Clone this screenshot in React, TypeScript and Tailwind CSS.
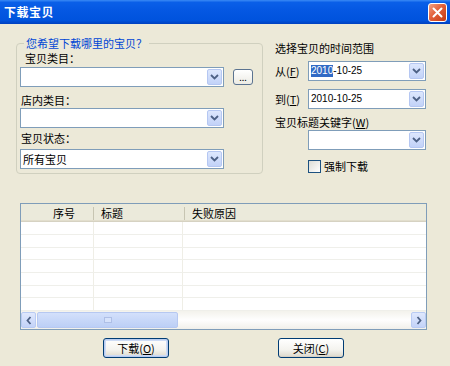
import React from "react";

function Chevron({ dir = "down" }: { dir?: "down" | "left" | "right" }) {
  if (dir === "down")
    return (
      <svg width="9" height="6" viewBox="0 0 9 6">
        <path d="M1 1 L4.5 4.5 L8 1" fill="none" stroke="#4d6185" strokeWidth="1.8" />
      </svg>
    );
  if (dir === "left")
    return (
      <svg width="6" height="9" viewBox="0 0 6 9">
        <path d="M4.5 1 L1.5 4.5 L4.5 8" fill="none" stroke="#4d6185" strokeWidth="1.8" />
      </svg>
    );
  return (
    <svg width="6" height="9" viewBox="0 0 6 9">
      <path d="M1.5 1 L4.5 4.5 L1.5 8" fill="none" stroke="#4d6185" strokeWidth="1.8" />
    </svg>
  );
}

function ArrowBtn() {
  return (
    <div className="mr-[1px] h-[16px] w-[15px] rounded-[2px] border border-[#b5c7f2] bg-[linear-gradient(to_bottom,#dde7fd,#c2d2f8)] flex items-center justify-center">
      <Chevron />
    </div>
  );
}

function Combo({ className, children }: { className: string; children?: React.ReactNode }) {
  return (
    <div className={className + " h-[20px] border border-[#7f9db9] bg-white flex items-center"}>
      <div className="flex-1 flex items-center pl-[2px] h-full overflow-hidden">{children}</div>
      <ArrowBtn />
    </div>
  );
}

function XpButton({ children, def }: { children: React.ReactNode; def?: boolean }) {
  return (
    <div
      className={
        "w-[66px] h-[20px] rounded-[3px] border border-[#003c74] flex items-center justify-center bg-[linear-gradient(to_bottom,#ffffff,#f4f3ee_60%,#dcd8cb)] " +
        (def ? "shadow-[inset_0_0_0_1px_#b9ccf0,inset_0_0_0_2px_#cddbf5]" : "shadow-[inset_0_-1px_0_#d6d0c5]")
      }
    >
      <span className="text-[11px] leading-[14px]">{children}</span>
    </div>
  );
}

export default function App() {
  const rows = [13, 13, 12, 13, 13, 12, 13];
  return (
    <div className="w-[450px] h-[366px] bg-[#ece9d8] flex flex-col overflow-hidden font-['Noto_Sans_CJK_SC',sans-serif] text-[11px] text-black">
      {/* Title bar */}
      <div className="h-[24px] shrink-0 flex items-center justify-between pl-[4px] pr-[3px] bg-[linear-gradient(to_bottom,#3a8af5_0%,#0a5fe8_10%,#0457e2_45%,#0053dd_85%,#0040bf_100%)]">
        <span className="text-white font-bold text-[12px] leading-[16px] tracking-[0.5px]">下载宝贝</span>
        <div className="w-[19px] h-[19px] rounded-[3px] border border-white flex items-center justify-center bg-[linear-gradient(135deg,#f2a184,#e2603a_45%,#c53a12)]">
          <svg width="11" height="11" viewBox="0 0 11 11">
            <path d="M1.5 1.5 L9.5 9.5 M9.5 1.5 L1.5 9.5" stroke="white" strokeWidth="2" strokeLinecap="round" />
          </svg>
        </div>
      </div>

      {/* Top area */}
      <div className="flex items-start">
        <fieldset className="ml-[16px] mt-[12px] w-[247px] shrink-0 border border-[#d0d0bf] rounded-[4px] pl-[3px] pr-[8px] pb-[4px] pt-0 min-w-0">
          <legend className="ml-[4px] px-[2px] text-[11px] leading-[14px] text-[#0046d5]">您希望下载哪里的宝贝？</legend>
          <div className="pl-[5px] leading-[16px]">宝贝类目：</div>
          <div className="mt-[1px] flex items-center">
            <Combo className="w-[204px]" />
            <div className="ml-[9px] w-[20px] h-[16px] rounded-[3px] border border-[#5b7390] bg-[linear-gradient(to_bottom,#ffffff,#ecebe4)] flex items-end justify-center pb-[3px]">
              <span className="text-[9px] leading-[6px] tracking-[0px]">...</span>
            </div>
          </div>
          <div className="mt-[5px] pl-[1px] leading-[16px]">店内类目：</div>
          <Combo className="w-[204px]" />
          <div className="mt-[2px] pl-[1px] leading-[16px]">宝贝状态：</div>
          <Combo className="w-[204px] mt-[3px]">
            <span className="leading-[16px]">所有宝贝</span>
          </Combo>
        </fieldset>

        <div className="ml-[12px] mt-[16px] shrink-0 flex flex-col items-start text-left">
          <div className="leading-[16px]">选择宝贝的时间范围</div>
          <div className="mt-[5px] flex items-center">
            <div className="w-[33px] leading-[16px]">
              从(<span className="underline">F</span>)
            </div>
            <Combo className="w-[118px]">
              <span className="font-['Liberation_Sans',sans-serif] text-[10px] leading-[12px] flex">
                <span className="bg-[#316ac5] text-white">2010</span>
                <span>-10-25</span>
              </span>
            </Combo>
          </div>
          <div className="mt-[8px] flex items-center">
            <div className="w-[33px] leading-[16px]">
              到(<span className="underline">T</span>)
            </div>
            <Combo className="w-[118px]">
              <span className="font-['Liberation_Sans',sans-serif] text-[10px] leading-[12px]">2010-10-25</span>
            </Combo>
          </div>
          <div className="mt-[5px] leading-[16px]">
            宝贝标题关键字(<span className="underline">W</span>)
          </div>
          <div className="flex items-center">
            <div className="w-[33px] h-[20px]" />
            <Combo className="w-[118px]" />
          </div>
          <div className="mt-[8px] flex items-center">
            <div className="w-[33px] h-[16px]" />
            <label className="block w-[118px] h-[16px] leading-[16px] text-left whitespace-nowrap">
              <span className="inline-block align-[-2px] w-[13px] h-[13px] border border-[#1c5180] bg-[linear-gradient(135deg,#dcdcd5,#ffffff)]" />
              <span className="ml-[3px]">强制下载</span>
            </label>
          </div>
        </div>
      </div>

      {/* List view */}
      <div className="ml-[20px] mt-[29px] w-[407px] border border-[#7f9db9] bg-white flex flex-col">
        <div className="h-[18px] flex items-center bg-[#ebeadb] shadow-[inset_0_-1px_0_#d6d2c2,inset_0_-2px_0_#e2decd]">
          <div className="w-[72px] h-full flex items-center pl-[32px]">
            <span className="leading-[14px]">序号</span>
          </div>
          <div className="w-[1px] h-[13px] bg-[#c7c5b2]" />
          <div className="w-[90px] h-full flex items-center pl-[7px]">
            <span className="leading-[14px]">标题</span>
          </div>
          <div className="w-[1px] h-[13px] bg-[#c7c5b2]" />
          <div className="flex-1 h-full flex items-center pl-[7px]">
            <span className="leading-[14px]">失败原因</span>
          </div>
        </div>
        <div className="flex flex-col">
          {rows.map((h, i) => (
            <div key={i} className="flex border-b border-[#efefea]" style={{ height: h }}>
              <div className="w-[73px] border-r border-[#efeee6]" />
              <div className="w-[89px] border-r border-[#efeee6]" />
              <div className="flex-1" />
            </div>
          ))}
        </div>
        <div className="h-[18px] flex items-center bg-[linear-gradient(to_bottom,#f3f2ec,#fefefe_50%,#f1f0ea)]">
          <div className="w-[15px] h-[16px] rounded-[2px] border border-[#b9cbf3] bg-[linear-gradient(to_bottom,#dfe8fd,#c3d3f8)] flex items-center justify-center">
            <Chevron dir="left" />
          </div>
          <div className="w-[141px] h-[16px] ml-[1px] rounded-[2px] border border-[#b6c8f1] bg-[linear-gradient(to_bottom,#d3e0fb,#bccff6)] flex items-center justify-center">
            <div className="w-[8px] h-[6px] border border-[#aebfe6] bg-[#d6e2fb]" />
          </div>
          <div className="flex-1" />
          <div className="w-[15px] h-[16px] rounded-[2px] border border-[#b9cbf3] bg-[linear-gradient(to_bottom,#dfe8fd,#c3d3f8)] flex items-center justify-center">
            <Chevron dir="right" />
          </div>
        </div>
      </div>

      {/* Buttons */}
      <div className="mt-[8px] flex ml-[103px] gap-[109px]">
        <XpButton def>
          下载(<span className="underline">O</span>)
        </XpButton>
        <XpButton>
          关闭(<span className="underline">C</span>)
        </XpButton>
      </div>
    </div>
  );
}
